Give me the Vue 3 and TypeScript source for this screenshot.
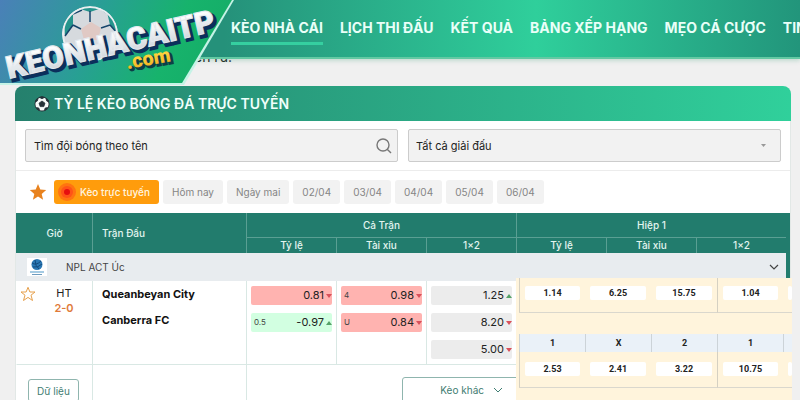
<script setup lang="ts">
import { ref } from 'vue'

interface Odd {
  line?: string
  value: string
  trend: 'up' | 'down'
  tone: 'red' | 'green' | 'grey'
}

const navItems: string[] = ['KÈO NHÀ CÁI', 'LỊCH THI ĐẤU', 'KẾT QUẢ', 'BẢNG XẾP HẠNG', 'MẸO CÁ CƯỢC', 'TIN']
const days: string[] = ['Hôm nay', 'Ngày mai', '02/04', '03/04', '04/04', '05/04', '06/04']
const markets: string[] = ['Tỷ lệ', 'Tài xỉu', '1×2']

const fullTime: Odd[][] = [
  [
    { value: '0.81', trend: 'down', tone: 'red' },
    { line: '0.5', value: '-0.97', trend: 'up', tone: 'green' },
  ],
  [
    { line: '4', value: '0.98', trend: 'down', tone: 'red' },
    { line: 'U', value: '0.84', trend: 'down', tone: 'red' },
  ],
  [
    { value: '1.25', trend: 'up', tone: 'grey' },
    { value: '8.20', trend: 'down', tone: 'grey' },
    { value: '5.00', trend: 'down', tone: 'grey' },
  ],
]

const extraTop: string[] = ['1.14', '6.25', '15.75', '1.04', '']
const extraHead: string[] = ['1', 'X', '2', '1', '']
const extraBottom: string[] = ['2.53', '2.41', '3.22', '10.75', '']

const query = ref('')
const league = ref('all')
</script>

<template>
  <div class="page">
    <header class="topbar">
      <nav class="nav">
        <a v-for="(item, i) in navItems" :key="item" href="#" :class="{ current: i === 0 }">{{ item }}</a>
      </nav>
    </header>

    <a class="brand" href="#" aria-label="KEONHACAITP.com">
      <svg width="240" height="88" viewBox="0 0 240 88">
        <defs>
          <linearGradient id="brandBg" x1="0" y1="0" x2="1" y2="0.15">
            <stop offset="0" stop-color="#4a80b8" />
            <stop offset="0.45" stop-color="#289f94" />
            <stop offset="0.8" stop-color="#17b36c" />
            <stop offset="1" stop-color="#15ae68" />
          </linearGradient>
          <linearGradient id="silver" x1="0" y1="0" x2="0" y2="1">
            <stop offset="0.2" stop-color="#ffffff" />
            <stop offset="1" stop-color="#c3cbd3" />
          </linearGradient>
          <linearGradient id="gold" x1="0" y1="0" x2="0" y2="1">
            <stop offset="0.2" stop-color="#ffe04a" />
            <stop offset="1" stop-color="#f0a818" />
          </linearGradient>
          <clipPath id="ballClip"><circle cx="90" cy="34" r="28" /></clipPath>
        </defs>
        <path d="M0 0H234L184 85H0Z" fill="#c5f3e6" />
        <path d="M0 0H232L182 83H0Z" fill="url(#brandBg)" />
        <g clip-path="url(#ballClip)">
          <circle cx="90" cy="34" r="28" fill="#d6dade" />
          <path d="M77 8L89 5L102 8L90 12ZM64 20L73 14L73 25L65 36ZM107 12L115 21L118 34L110 25Z" fill="#26948c" />
          <path d="M81 29L91 22L101 28L98 40H84Z" fill="#e0c9c4" />
          <path d="M90 11V22M101 28L110 25M81 29L73 25M73 14L82 10M101 9L108 14M73 25L65 36M110 25L118 34" fill="none" stroke="#17456b" stroke-width="1.5" />
          <circle cx="90" cy="34" r="27" fill="none" stroke="#e9eef0" stroke-width="2" />
        </g>
        <g transform="rotate(-13 12 79)" class="wordmark">
          <text x="11" y="81" fill="#0b2f5c" stroke="#0b2f5c" stroke-width="3">KEONHACAITP</text>
          <text x="9" y="78" fill="url(#silver)" stroke="#e4e9ee" stroke-width="1">KEONHACAITP</text>
        </g>
        <g transform="rotate(-10 128 68)" class="dotcom">
          <text x="129" y="71" fill="#0d3f46" stroke="#0d3f46" stroke-width="2">.com</text>
          <text x="127" y="69" fill="url(#gold)">.com</text>
        </g>
      </svg>
    </a>

    <main class="content">
      <p class="lead">ên ru.</p>

      <section class="card">
        <h1 class="card-title">
          <svg width="16" height="16" viewBox="0 0 16 16" aria-hidden="true">
            <circle cx="8" cy="8" r="7.5" fill="#253238" />
            <circle cx="8" cy="8" r="6.6" fill="#f6faf9" />
            <path d="M8 5L11 7.2L9.8 10.6H6.2L5 7.2ZM5.6 1.4L8 2.8L10.4 1.4L8 .6ZM1.3 6L3.3 5L4 2.6L1.8 4ZM14.7 6L12.7 5L12 2.6L14.2 4ZM2.4 11.6L4.8 12L5.6 14.4L3.4 13.4ZM13.6 11.6L11.2 12L10.4 14.4L12.6 13.4Z" fill="#253238" stroke="#253238" stroke-width=".8" />
          </svg>
          TỶ LỆ KÈO BÓNG ĐÁ TRỰC TUYẾN
        </h1>

        <form class="search" @submit.prevent>
          <div class="field">
            <input v-model="query" type="text" placeholder="Tìm đội bóng theo tên" aria-label="Tìm đội bóng theo tên" />
            <button type="submit" aria-label="Tìm">
              <svg width="16" height="16" viewBox="0 0 16 16" fill="none" stroke="#777" stroke-width="1.4">
                <circle cx="7" cy="7" r="6" />
                <path d="M11.2 11.2L15 15" />
              </svg>
            </button>
          </div>
          <div class="field">
            <select v-model="league" aria-label="Giải đấu">
              <option value="all">Tất cả giải đấu</option>
            </select>
            <svg class="caret" width="5" height="3" viewBox="0 0 5 3" aria-hidden="true"><path d="M0 0H5L2.5 3Z" fill="#999" /></svg>
          </div>
        </form>

        <div class="filters">
          <button class="fav" type="button" aria-label="Yêu thích">
            <svg width="18" height="18" viewBox="0 0 18 18"><path d="M9 1L11.3 6.5L17.2 7L12.7 10.9L14.1 16.8L9 13.6L3.9 16.8L5.3 10.9L.8 7L6.7 6.5Z" fill="#e8821e" /></svg>
          </button>
          <button class="tab live" type="button">
            <svg width="18" height="18" viewBox="0 0 18 18" aria-hidden="true">
              <circle cx="9" cy="9" r="9" fill="#ff7410" />
              <circle cx="9" cy="9" r="6" fill="#ff5318" />
              <circle cx="9" cy="9" r="3" fill="#e60f0f" />
            </svg>
            Kèo trực tuyến
          </button>
          <button v-for="day in days" :key="day" class="tab" type="button">{{ day }}</button>
        </div>

        <div class="board">
          <table class="odds">
            <colgroup>
              <col class="col-time" />
              <col class="col-match" />
              <col v-for="n in 6" :key="n" />
            </colgroup>
            <thead>
              <tr class="head-main">
                <th rowspan="2">Giờ</th>
                <th rowspan="2" class="match-head">Trận Đấu</th>
                <th colspan="3">Cả Trận</th>
                <th colspan="3">Hiệp 1</th>
              </tr>
              <tr class="head-sub">
                <th v-for="m in markets" :key="'f' + m">{{ m }}</th>
                <th v-for="m in markets" :key="'h' + m">{{ m }}</th>
              </tr>
            </thead>
            <tbody>
              <tr class="league">
                <td colspan="8">
                  <div class="league-row">
                    <svg width="20" height="18" viewBox="0 0 20 18" aria-hidden="true">
                      <rect width="20" height="18" fill="#fff" />
                      <circle cx="10" cy="6.5" r="5.5" fill="#2a78b4" />
                      <path d="M5 5Q9 8 14 3M6 9Q11 10 15 6M8 2Q8 8 12 11" fill="none" stroke="#124b7d" stroke-width="1" />
                      <path d="M3 14H17" stroke="#a5cbe3" stroke-width="2" />
                      <path d="M5 16.5H15" stroke="#6d9cbf" stroke-width="1" />
                    </svg>
                    <span>NPL ACT Úc</span>
                    <svg class="chev" width="10" height="6" viewBox="0 0 10 6" fill="none" stroke="#444" stroke-width="1.2" aria-hidden="true"><path d="M1 1L5 5L9 1" /></svg>
                  </div>
                </td>
              </tr>
              <tr class="match">
                <td>
                  <div class="time">
                    <svg width="16" height="16" viewBox="0 0 16 16" fill="none" stroke="#e6a04c" stroke-width="1" aria-hidden="true"><path d="M8 1.3L9.9 6H15L11 9.2L12.5 14.5L8 11.4L3.5 14.5L5 9.2L1 6H6.1Z" /></svg>
                    <div class="clock">
                      <span>HT</span>
                      <strong>2-0</strong>
                    </div>
                  </div>
                </td>
                <td>
                  <div class="teams">
                    <span>Queanbeyan City</span>
                    <span>Canberra FC</span>
                  </div>
                </td>
                <td v-for="(group, g) in fullTime" :key="g">
                  <div class="stack">
                    <div v-for="odd in group" :key="odd.value" class="odd" :class="odd.tone">
                      <small>{{ odd.line }}</small>
                      <span>{{ odd.value }}</span>
                      <i :class="odd.trend"></i>
                    </div>
                  </div>
                </td>
                <td colspan="3" rowspan="2" class="half">
                  <table class="extra">
                    <tbody>
                      <tr class="line-top">
                        <td v-for="(v, i) in extraTop" :key="i"><span>{{ v }}</span></td>
                      </tr>
                      <tr class="gap"><td colspan="5"></td></tr>
                      <tr class="line-head">
                        <th v-for="(v, i) in extraHead" :key="i">{{ v }}</th>
                      </tr>
                      <tr class="line-bottom">
                        <td v-for="(v, i) in extraBottom" :key="i"><span>{{ v }}</span></td>
                      </tr>
                      <tr class="gap"><td colspan="5"></td></tr>
                    </tbody>
                  </table>
                </td>
              </tr>
              <tr class="actions">
                <td><button type="button" class="data">Dữ liệu</button></td>
                <td></td>
                <td colspan="3">
                  <button type="button" class="more">
                    Kèo khác
                    <svg width="10" height="6" viewBox="0 0 10 6" fill="none" stroke="#3f7d72" stroke-width="1" aria-hidden="true"><path d="M1 1L5 5L9 1" /></svg>
                  </button>
                </td>
              </tr>
            </tbody>
          </table>
        </div>
      </section>
    </main>
  </div>
</template>

<style>
body {
  margin: 0;
  background: #f0f0f0;
}
</style>

<style scoped>
.page {
  position: relative;
  height: 100vh;
  overflow: hidden;
  background: #f0f0f0;
  font-family: Inter, "Noto Sans", sans-serif;
  font-size: 11px;
  color: #222;
}
button, input, select {
  font-family: inherit;
}
.topbar {
  position: relative;
  z-index: 1;
  box-sizing: border-box;
  height: 59px;
  padding-left: 231px;
  overflow: hidden;
  border-bottom: 2px solid #63c9a3;
  background: linear-gradient(90deg, #25917a 28%, #2fcf9b 67%, #22957b 100%);
  box-shadow: 0 2px 4px rgba(60, 160, 120, 0.25);
}
.nav {
  display: flex;
  gap: 17px;
}
.nav a {
  padding: 18px 0 5px;
  border-bottom: 3px solid transparent;
  color: #e9fff8;
  font-size: 14px;
  font-weight: 700;
  line-height: 19px;
  text-decoration: none;
  white-space: nowrap;
}
.nav a.current {
  border-color: #35cfa0;
}
.brand {
  position: absolute;
  z-index: 2;
  top: 0;
  left: 0;
}
.brand svg {
  display: block;
}
.wordmark {
  font: 900 31px Roboto, sans-serif;
}
.dotcom {
  font: 900 20px Roboto, sans-serif;
}
.content {
  padding: 0 9px 0 15px;
}
.lead {
  margin: -12px 0 0 179px;
  padding-bottom: 19px;
  font-size: 14px;
  line-height: 20px;
}
.card {
  border-left: 1px solid #e2e8e6;
  border-right: 1px solid #e2e8e6;
  border-radius: 8px 8px 0 0;
  background: #fff;
}
.card-title {
  display: flex;
  align-items: center;
  gap: 4px;
  height: 35px;
  margin: 0 -1px;
  padding-left: 19px;
  border-radius: 8px 8px 0 0;
  background: linear-gradient(90deg, #25806d, #30d09b);
  color: #f0fffb;
  font-size: 14px;
  font-weight: 600;
}
.search {
  display: flex;
  gap: 10px;
  padding: 8px 9px;
  border-bottom: 1px solid #ececec;
}
.field {
  display: flex;
  flex: 1;
  align-items: center;
  box-sizing: border-box;
  height: 33px;
  border: 1px solid #ccc;
  border-radius: 2px;
  background: #f2f2f2;
}
.field input, .field select {
  flex: 1;
  min-width: 0;
  padding: 0 8px;
  border: 0;
  outline: 0;
  background: none;
  color: #222;
  font-size: 11px;
  appearance: none;
}
.field select {
  padding: 0 7px;
}
.field input::placeholder {
  color: #222;
  opacity: 1;
}
.field button {
  display: flex;
  padding: 0 5px;
  border: 0;
  background: none;
}
.caret {
  margin-right: 14px;
}
.filters {
  display: flex;
  align-items: center;
  gap: 4px;
  padding: 9px 13px;
}
.fav {
  display: flex;
  margin-right: 3px;
  padding: 0;
  border: 0;
  background: none;
}
.tab {
  display: flex;
  align-items: center;
  gap: 4px;
  height: 24px;
  padding: 0 9px;
  border: 0;
  border-radius: 3px;
  background: #f2f2f2;
  color: #858585;
  font-size: 10px;
  white-space: nowrap;
}
.tab.live {
  padding-left: 4px;
  background: #ff9c0c;
  color: #fff6e0;
  font-weight: 500;
}
.board {
  padding-right: 4px;
  background: linear-gradient(#227c6d, #227c6d) no-repeat right top / 10px 65px;
}
.odds {
  width: 100%;
  table-layout: fixed;
  border-spacing: 0;
}
.odds td, .odds th {
  padding: 0;
}
.col-time {
  width: 76px;
}
.col-match {
  width: 154px;
}
.odds thead th {
  border-left: 1px solid #5a9f93;
  background: #227c6d;
  color: #e2f5f0;
  font-size: 10px;
  font-weight: 500;
  line-height: 15px;
}
.odds thead th:first-child {
  border-left-color: #227c6d;
}
.odds thead .head-sub th {
  height: 15px;
  border-top: 1px solid #5a9f93;
  border-left-color: #5a9f93;
}
.head-main {
  height: 24px;
}
.odds thead .match-head {
  padding-left: 9px;
  text-align: left;
}
.league td {
  height: 28px;
  background: #e8ecef;
}
.league-row {
  display: flex;
  align-items: center;
  padding: 0 7px 0 11px;
  color: #444;
  font-size: 10px;
}
.league-row span {
  flex: 1;
  padding-left: 19px;
}
.match > td, .actions > td {
  border-left: 1px solid #d9e8e4;
  background: #fff;
  vertical-align: top;
}
.match > td:first-child, .actions > td:first-child {
  border-left-color: #fff;
}
.match > td:not(.half) {
  height: 82px;
  border-bottom: 1px solid #d9e8e4;
}
.time {
  display: flex;
  gap: 10px;
  padding: 5px 3px;
}
.clock {
  display: grid;
  width: 36px;
  line-height: 15px;
  text-align: center;
}
.clock strong {
  color: #e07a3a;
  font-weight: 600;
}
.teams {
  display: grid;
  gap: 10px;
  padding: 5px 9px;
  color: #111;
  font-size: 11px;
  font-weight: 700;
  line-height: 16px;
}
.stack {
  display: grid;
  gap: 8px;
  padding: 5px 4px;
}
.odd {
  display: flex;
  align-items: center;
  height: 19px;
  padding: 0 0 0 3px;
  border-radius: 2px;
  line-height: 19px;
}
.odd small {
  flex: 1;
  color: #444;
  font-size: 8px;
}
.odd span {
  font-size: 11px;
}
.odd.red {
  background: #ffb3b0;
}
.odd.green {
  background: #d2ffe1;
}
.odd.grey {
  background: #ececec;
}
.odd i {
  margin-left: 2px;
  border: 3px solid transparent;
}
.odd i.up {
  border-top-width: 0;
  border-bottom: 4px solid #55a268;
}
.odd i.down {
  border-top: 4px solid #d9505a;
  border-bottom-width: 0;
}
.actions > td {
  height: 50px;
}
.data, .more {
  border: 1px solid #8fb5ae;
  border-radius: 3px;
  background: #fff;
  color: #3f7d72;
  font-size: 10px;
}
.data {
  height: 23px;
  margin: 14px 0 0 11px;
  padding: 0 8px;
}
.more {
  display: flex;
  align-items: center;
  gap: 9px;
  height: 26px;
  margin: 12px -16px 0 auto;
  padding: 0 28px 0 37px;
}
.odds .half {
  border-left: 0;
}
.extra {
  position: relative;
  width: calc(100% + 6px);
  margin: -3px -6px 0 0;
  padding-left: 3px;
  table-layout: fixed;
  border-spacing: 0;
  background: #fff4dc;
  color: #222;
  font: 700 9px Roboto, sans-serif;
}
.extra td, .extra th {
  box-sizing: border-box;
  width: 66px;
  text-align: center;
  vertical-align: top;
}
.extra td:last-child, .extra th:last-child {
  width: auto;
}
.line-top td, .line-bottom td {
  border-bottom: 1px solid #dad7cd;
}
.line-top td:nth-child(3n + 1), .line-bottom td:nth-child(3n + 1) {
  border-left: 1px solid #d5d0c2;
}
.line-top td {
  height: 35px;
}
.line-top span, .line-bottom span {
  display: block;
  height: 14px;
  margin: 8px 5px 0;
  border-radius: 2px;
  background: #fff;
  font-size: 9px;
  line-height: 14px;
}
.line-top td:last-child span, .line-bottom td:last-child span {
  margin-right: 0;
}
.extra .gap td {
  height: 21px;
}
.line-head th {
  height: 18px;
  border-left: 1px solid #ccd3d8;
  background: #eaf1f8;
  vertical-align: middle;
}
.line-bottom td {
  height: 36px;
}
.line-bottom span {
  margin-top: 10px;
}
</style>
